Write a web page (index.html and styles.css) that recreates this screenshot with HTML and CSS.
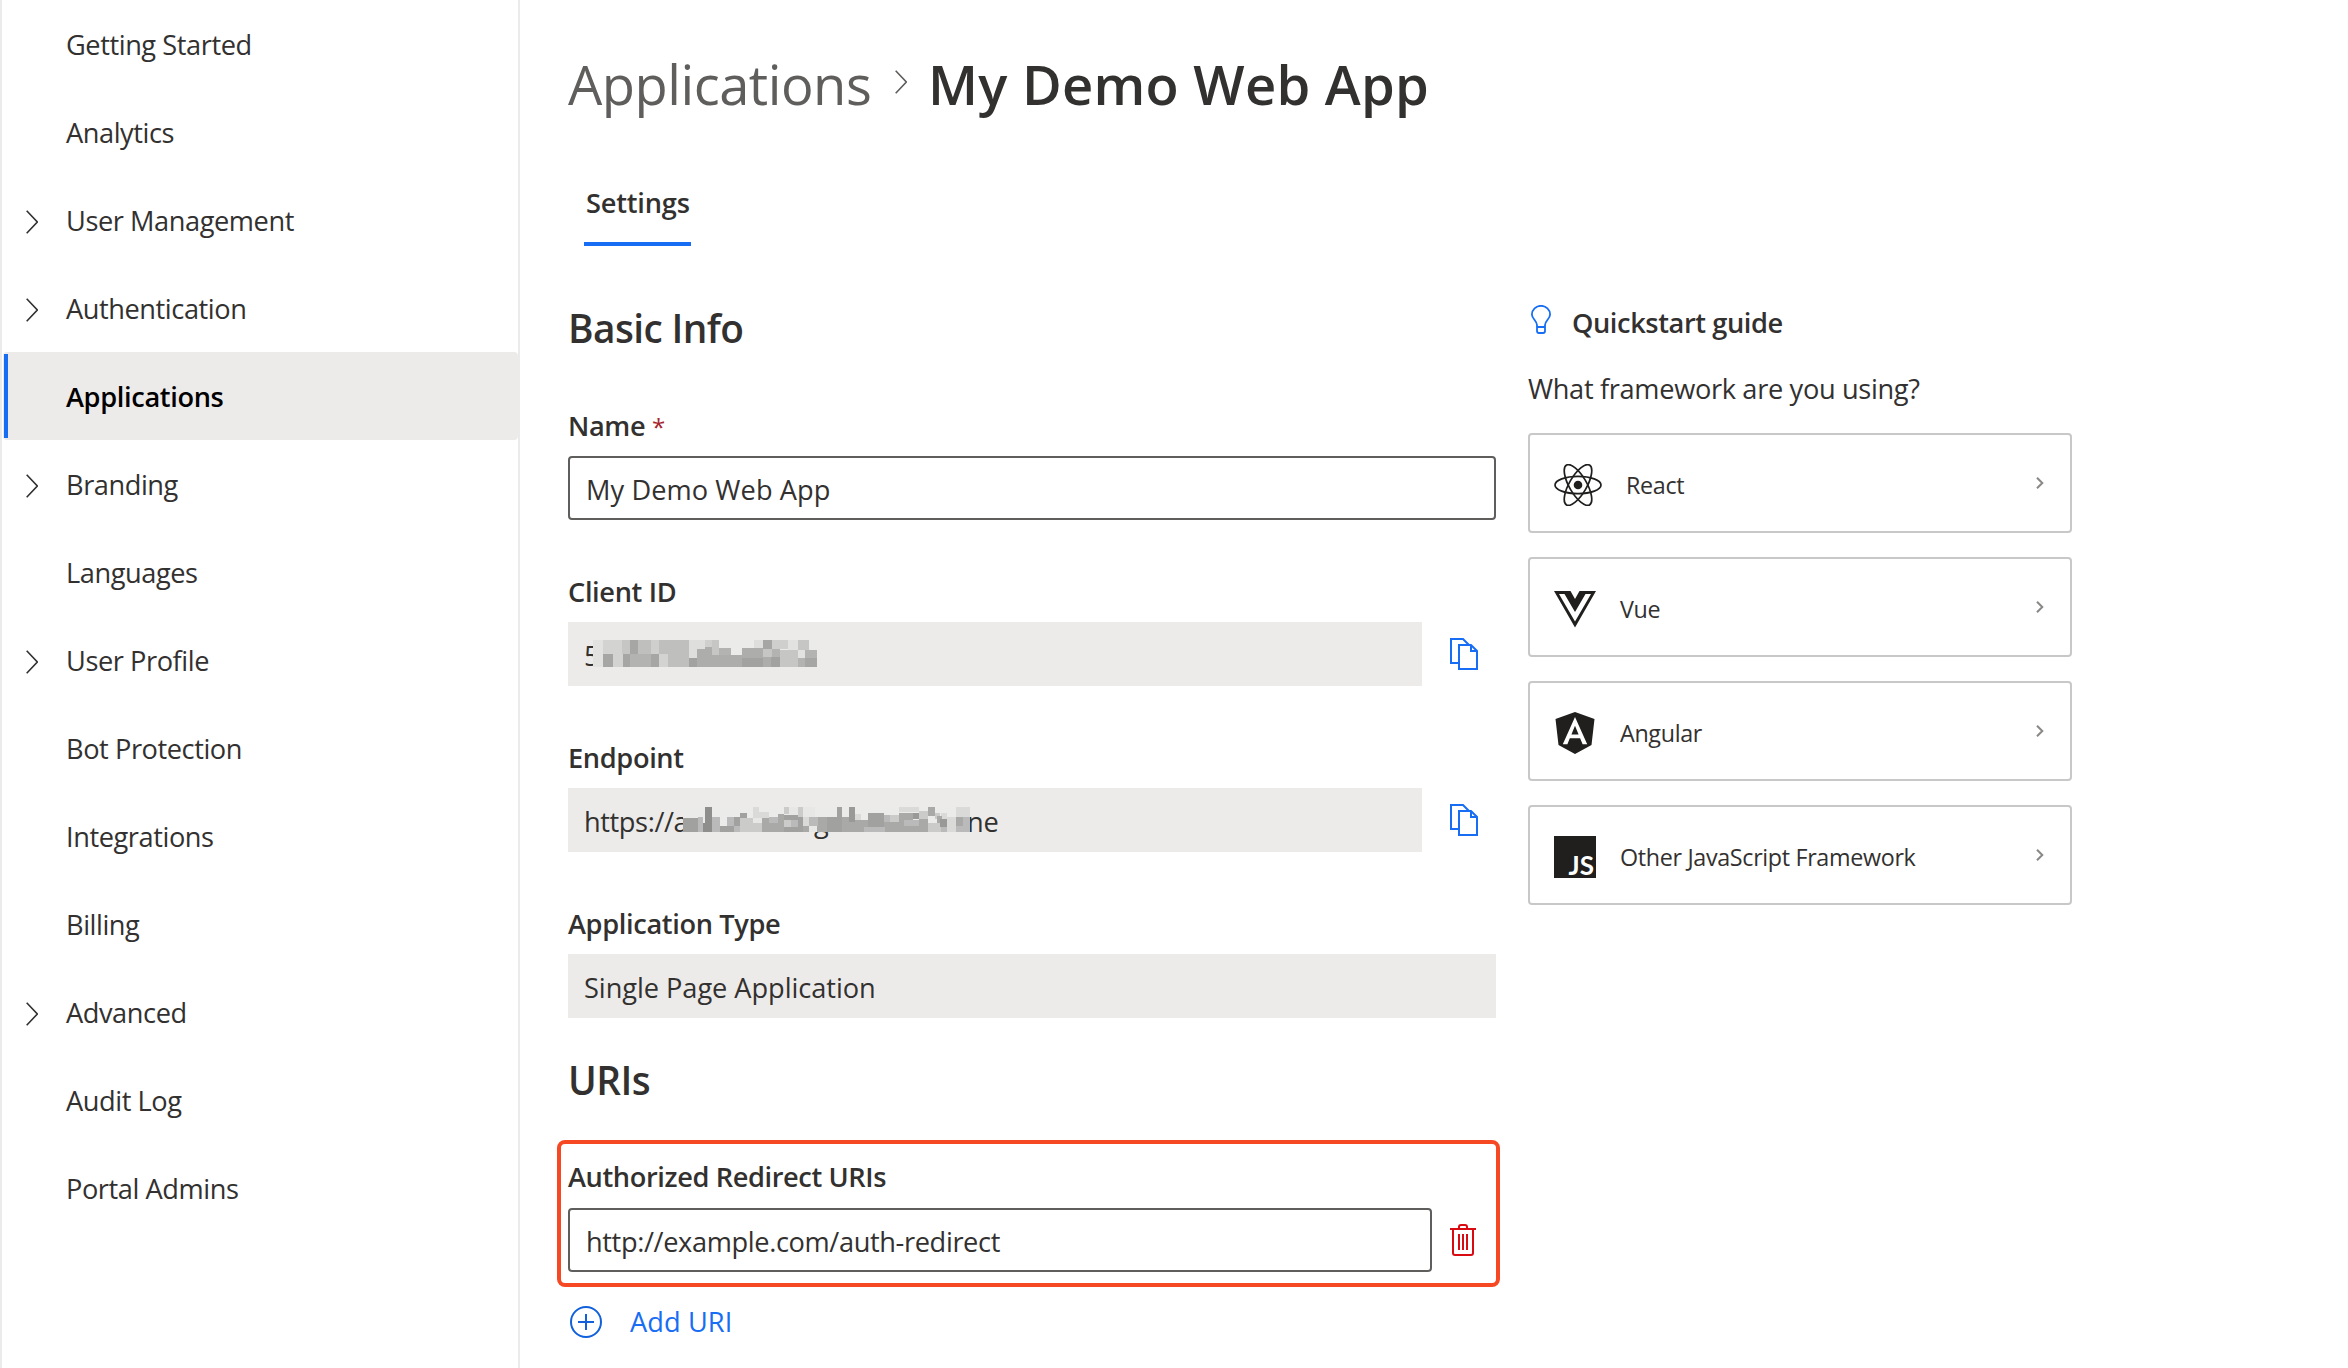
FILE: index.html
```
<!DOCTYPE html>
<html lang="en">
<head>
<meta charset="utf-8">
<title>My Demo Web App</title>
<link rel="stylesheet" href="styles.css">
</head>
<body>
<svg class="defs" width="0" height="0" aria-hidden="true">
  <symbol id="chevron" viewBox="0 0 12 24"><path d="M.7.7 11.3 12 .7 23.3" fill="none" stroke="currentColor" stroke-width="1.6"/></symbol>
  <symbol id="chevron-small" viewBox="0 0 8 12"><path d="M1 .8 6.3 6 1 11.2" fill="none" stroke="currentColor" stroke-width="2"/></symbol>
  <symbol id="copy" viewBox="0 0 28 32"><path d="M8 25H1V1h12l6 6M9 7h12l6 6v18H9zM21 7v6h6" fill="none" stroke="currentColor" stroke-width="2"/></symbol>
</svg>
<div class="page">
  <nav class="sidebar">
    <a class="nav-item"><span class="nav-text">Getting Started</span></a>
    <a class="nav-item"><span class="nav-text">Analytics</span></a>
    <a class="nav-item"><svg class="nav-chevron"><use href="#chevron"/></svg><span class="nav-text">User Management</span></a>
    <a class="nav-item"><svg class="nav-chevron"><use href="#chevron"/></svg><span class="nav-text">Authentication</span></a>
    <a class="nav-item selected"><span class="nav-text">Applications</span></a>
    <a class="nav-item"><svg class="nav-chevron"><use href="#chevron"/></svg><span class="nav-text">Branding</span></a>
    <a class="nav-item"><span class="nav-text">Languages</span></a>
    <a class="nav-item"><svg class="nav-chevron"><use href="#chevron"/></svg><span class="nav-text">User Profile</span></a>
    <a class="nav-item"><span class="nav-text">Bot Protection</span></a>
    <a class="nav-item"><span class="nav-text">Integrations</span></a>
    <a class="nav-item"><span class="nav-text">Billing</span></a>
    <a class="nav-item"><svg class="nav-chevron"><use href="#chevron"/></svg><span class="nav-text">Advanced</span></a>
    <a class="nav-item"><span class="nav-text">Audit Log</span></a>
    <a class="nav-item"><span class="nav-text">Portal Admins</span></a>
  </nav>
  <main class="main">
    <header class="breadcrumb">
      <span class="crumb">Applications</span>
      <svg class="crumb-chevron"><use href="#chevron"/></svg>
      <h1 class="crumb-current">My Demo Web App</h1>
    </header>
    <div class="tabs"><a class="tab">Settings</a></div>
    <div class="columns">
      <section class="form">
        <h2 class="section-title">Basic Info</h2>
        <div class="field first">
          <label class="label">Name <span class="required">*</span></label>
          <div class="input wide">My Demo Web App</div>
        </div>
        <div class="field">
          <label class="label">Client ID</label>
          <div class="field-row">
            <div class="readonly">5<svg class="mask mask-id" viewBox="99 60 672 81" preserveAspectRatio="none" shape-rendering="crispEdges">
              <path fill="#ebebe9" d="M99 60h672v81H99z"/>
              <path fill="#e2e2e0" d="M99 60h30v81H99zM684 60h30v30h-30zM714 90h21v24h-21z"/>
              <path fill="#d3d3d1" d="M129 60h60v81h-60zM297 102h27v39h-27z"/>
              <path fill="#c6c6c4" d="M186 60h24v42h-24zM456 60h21v45h-21zM609 87h27v24h-27zM660 90h54v51h-54zM714 60h33v30h-33z"/>
              <path fill="#a6a6a4" d="M129 102h30v39h-30zM189 102h21v39h-21zM210 60h24v42h-24zM273 102h24v39h-24zM609 60h27v27h-27zM735 114h36v27h-36z"/>
              <path fill="#bfbfbd" d="M234 60h39v42h-39zM297 60h90v81h-63v-39h-27z"/>
              <path fill="#b3b3b1" d="M210 102h63v39h-63zM477 84h36v21h-36zM636 87h24v24h-24zM714 114h21v27h-21zM735 90h36v24h-36z"/>
              <path fill="#cfcfcd" d="M273 60h24v42h-24zM435 60h21v21h-21zM636 60h48v27h-48z"/>
              <path fill="#dededd" d="M387 60h48v27h-24v27h-24zM582 60h27v24h-27z"/>
              <path fill="#a2a2a0" d="M387 114h24v27h-24zM546 114h63v27h-63zM633 111h27v30h-27z"/>
              <path fill="#adadab" d="M411 87h24v-6h21v24h90v-21h63v30h-63v27H411zM609 111h24v30h-24z"/>
            </svg></div>
            <svg class="copy"><use href="#copy"/></svg>
          </div>
        </div>
        <div class="field">
          <label class="label">Endpoint</label>
          <div class="field-row">
            <div class="readonly"><span class="url-start">https://a</span><span class="url-mid">g</span><span class="url-end">ne</span><svg class="mask mask-url" viewBox="69 51 861 75" preserveAspectRatio="none" shape-rendering="crispEdges">
              <path fill="#ebebe9" d="M69 51h861v75H69z"/>
              <path fill="#a1a1a0" d="M69 85h45v41H69zM180 107h42v19h-42zM222 81h18v26h-18zM240 69h21v15h-21zM372 75h42v51h-42zM414 81h15v45h-15zM501 81h44v45h-44zM531 51h15v75h-15zM624 69h48v41h-48z"/>
              <path fill="#bababa" d="M114 81h15v45h-15zM156 81h24v45h-24zM201 81h21v26h-21zM222 107h18v19h-18zM327 81h27v17h-27zM393 90h21v20h-21zM447 81h27v26h-27zM612 110h63v16h-63zM672 75h18v20h-18zM732 90h45v18h-45zM843 110h18v16h-18zM888 107h21v19h-21zM909 80h21v46h-21z"/>
              <path fill="#8e8e8c" d="M135 51h21v75h-27V98h6z"/>
              <path fill="#cbcbca" d="M240 84h66v42h-66zM372 51h15v21h-15zM372 90h21v20h-21zM414 51h15v30h-15zM690 75h27v20h-27zM717 75h15v23h-15zM777 63h27v23h-27zM804 98h39v28h-39zM825 69h15v19h-15z"/>
              <path fill="#e7e7e6" d="M279 84h27v14h-27zM387 51h27v24h-27zM429 51h36v30h-36zM447 107h24v19h-24z"/>
              <path fill="#dadad9" d="M279 51h18v33h-18zM297 66h30v18h-30zM429 81h18v27h-18zM585 72h18v18h-18zM717 51h60v15h-60zM843 69h18v17h-18zM861 81h27v45h-27zM888 51h42v29h-42z"/>
              <path fill="#a9a9a7" d="M306 84h21v14h45v28h-66zM354 72h18v26h-18zM429 108h18v18h-18zM471 107h3V81h27v45h-30zM546 81h21v14h18v31h-39zM585 90h39v20h-12v16h-27zM672 95h60v31h-57v-16h-3zM717 69h42v21h-27v5h-15zM732 108h72v18h-72zM777 87h27v21h-27zM804 51h21v27h-21zM831 78h15v20h-15zM888 80h21v27h-21z"/>
              <path fill="#999998" d="M567 51h18v44h-18zM759 69h18v17h-18zM840 88h21v22h-21z"/>
            </svg></div>
            <svg class="copy"><use href="#copy"/></svg>
          </div>
        </div>
        <div class="field">
          <label class="label">Application Type</label>
          <div class="readonly">Single Page Application</div>
        </div>
        <h2 class="section-title uris">URIs</h2>
        <div class="highlight">
          <label class="label">Authorized Redirect URIs</label>
          <div class="field-row">
            <div class="input">http://example.com/auth-redirect</div>
            <svg class="trash" viewBox="0 0 26 32" fill="none" stroke="currentColor" stroke-width="2"><path d="M0 5h26M3 5v24q0 2 2 2h16q2 0 2-2V5M9 5V3q0-2 2-2h4q2 0 2 2v2M9 10v16M13 10v16M17 10v16"/></svg>
          </div>
        </div>
        <a class="add">
          <svg class="add-icon" viewBox="0 0 32 32" fill="none" stroke="currentColor" stroke-width="2"><circle cx="16" cy="16" r="15"/><path d="M8 16h16M16 8v16"/></svg>
          <span>Add URI</span>
        </a>
      </section>
      <aside class="quickstart">
        <h3 class="quick-title"><svg class="bulb" viewBox="0 0 20 29" fill="none" stroke="currentColor" stroke-width="1.8"><path d="M6 22v-2C6 16 .9 13.500.9 9.500a9.100 8.700 0 0 1 18.200 0C19.100 13.500 14 16 14 20v6q0 2-2 2H8q-2 0-2-2v-4h8"/></svg><span>Quickstart guide</span></h3>
        <p class="question">What framework are you using?</p>
        <a class="card">
          <svg class="logo-react" viewBox="0 0 48 42" fill="none" stroke="#201f1e" stroke-width="1.7"><circle cx="24" cy="21" r="4.300" fill="#201f1e" stroke="none"/><ellipse cx="24" cy="21" rx="23" ry="8.700"/><ellipse cx="24" cy="21" rx="23" ry="8.700" transform="rotate(60 24 21)"/><ellipse cx="24" cy="21" rx="23" ry="8.700" transform="rotate(120 24 21)"/></svg>
          <span class="card-text">React</span><svg class="card-chevron"><use href="#chevron-small"/></svg>
        </a>
        <a class="card">
          <svg class="logo" viewBox="0 0 42 42"><path fill="#201f1e" fill-rule="evenodd" d="M0 3h16.500L21 11l4.500-8H42L21 39.500zM5 6l16 27.500L37 6h-5.500L21 24 10.500 6z"/></svg>
          <span class="card-text">Vue</span><svg class="card-chevron"><use href="#chevron-small"/></svg>
        </a>
        <a class="card">
          <svg class="logo" viewBox="0 0 42 42"><path fill="#201f1e" fill-rule="evenodd" d="M21 0 40.500 7 37.500 33 21 42 4.500 33 1.500 7zM21 5 8.800 32.300h4.600l2.400-6.100h10.300l2.500 6.100h4.600zM21 13.700l3.600 8.700h-7.200z"/></svg>
          <span class="card-text">Angular</span><svg class="card-chevron"><use href="#chevron-small"/></svg>
        </a>
        <a class="card">
          <span class="logo logo-js">JS</span>
          <span class="card-text">Other JavaScript Framework</span><svg class="card-chevron"><use href="#chevron-small"/></svg>
        </a>
      </aside>
    </div>
  </main>
</div>
</body>
</html>
```
FILE: styles.css
```
* { box-sizing: border-box; }

body {
  margin: 0;
  background: #fff;
  color: #323130;
  font: 400 27.2px/40px "Open Sans", "Noto Sans", sans-serif;
  letter-spacing: -0.2px;
  white-space: nowrap;
}

h1, h2, h3, p { margin: 0; }
svg { display: block; flex: none; }
.defs { position: absolute; }

.page { display: flex; height: 1368px; overflow: hidden; }

/* Sidebar */
.sidebar {
  flex: none;
  width: 520px;
  border: solid #ebebeb;
  border-width: 0 2px;
}
.nav-item {
  display: flex;
  align-items: center;
  height: 88px;
  margin-left: 1px;
  padding-left: 23px;
  letter-spacing: -0.43px;
}
.nav-text { margin-left: 40px; padding-top: 2px; }
.nav-chevron { width: 12px; height: 24px; margin-top: 3px; color: #323130; }
.nav-chevron + .nav-text { margin-left: 28px; }
.selected {
  padding-left: 0;
  border-radius: 4px;
  background: #edebe9;
  color: #000;
  font-weight: 600;
  letter-spacing: -0.35px;
}
.selected::before { content: ""; width: 4px; height: 84px; margin-left: 1px; background: #176df3; }
.selected .nav-text { margin-left: 58px; }

/* Header */
.main { flex: 1; padding: 44px 0 0 48px; }
.breadcrumb { display: flex; align-items: center; height: 80px; font-size: 54.3px; line-height: 80px; }
.crumb { width: 327px; color: #605e5c; letter-spacing: -0.5px; }
.crumb-chevron { width: 12px; height: 24px; margin-top: -4px; color: #605e5c; }
.crumb-current { margin-left: 21px; font-size: inherit; font-weight: 600; letter-spacing: 0.25px; }

.tabs { display: flex; height: 88px; margin: 34px 0 0 16px; }
.tab { width: 107px; height: 88px; padding: 25px 0 0 2px; border-bottom: 4px solid #176df3; font-weight: 600; }

.columns { display: flex; gap: 32px; margin-top: 52px; }
.form { width: 928px; }
.section-title { height: 60px; font-size: 38.8px; line-height: 60px; font-weight: 600; letter-spacing: -0.6px; }

/* Fields */
.field { margin-top: 50px; }
.first { margin-top: 46px; }
.label { display: block; height: 52px; padding-top: 2px; font-weight: 600; letter-spacing: -0.35px; }
.required { color: #a4262c; font-size: 24px; font-weight: 400; }
.field-row { display: flex; align-items: center; }
.input {
  flex: 1;
  height: 64px;
  padding-left: 16px;
  border: 2px solid #605e5c;
  border-radius: 4px;
  line-height: 64px;
  letter-spacing: -0.37px;
}
.wide { letter-spacing: 0.08px; }
.readonly {
  position: relative;
  flex: none;
  height: 64px;
  padding-left: 16px;
  background: #edebe9;
  line-height: 67px;
  letter-spacing: -0.05px;
}
.field-row .readonly { display: flex; width: 854px; }
.copy { width: 28px; height: 32px; margin-left: 28px; color: #176df3; }

/* Pixelated redaction over the private values */
.mask { position: absolute; }
.mask-id { left: 25px; top: 18px; width: 224px; height: 27px; }
.mask-url { left: 115px; top: 19px; width: 287px; height: 25px; }
.url-start { width: 230px; letter-spacing: -0.4px; }
.url-mid { width: 153px; }

.uris { margin-top: 32px; }
.highlight {
  margin: 30px -4px 0 -11px;
  height: 147px;
  padding: 11px 20px 0 7px;
  border: 4px solid #f54823;
  border-radius: 8px;
}
.highlight .label { height: 53px; letter-spacing: -0.38px; }
.trash { width: 26px; height: 32px; margin-left: 18px; color: #d90b12; }
.add { display: flex; align-items: center; height: 40px; margin: 15px 0 0 2px; color: #176df3; letter-spacing: 0.1px; }
.add-icon { width: 32px; height: 32px; margin-right: 28px; color: #1160dc; }

/* Quickstart */
.quickstart { width: 544px; }
.quick-title { display: flex; align-items: flex-start; height: 71px; padding-top: 5px; font-size: inherit; font-weight: 600; letter-spacing: -0.4px; }
.bulb { width: 20px; height: 29px; margin: 2px 21px 0 3px; color: #176df3; }
.question { height: 64px; letter-spacing: -0.33px; }
.card {
  display: flex;
  align-items: center;
  height: 100px;
  margin-bottom: 24px;
  padding: 0 26px 0 24px;
  border: 2px solid #c8c8c8;
  border-radius: 4px;
  font-size: 23.3px;
  letter-spacing: -0.33px;
}
.logo { flex: none; width: 42px; height: 42px; margin-top: 4px; }
.logo-react { width: 48px; height: 42px; margin-top: 4px; }
.logo-js {
  padding: 16px 2px 0 0;
  background: #201f1e;
  color: #fff;
  font: 700 26px/26px "Lato", sans-serif;
  letter-spacing: 0;
  text-align: right;
}
.card-text { flex: 1; margin-left: 24px; padding-top: 3px; }
.card-chevron { width: 8px; height: 12px; color: #8a8886; }
```
